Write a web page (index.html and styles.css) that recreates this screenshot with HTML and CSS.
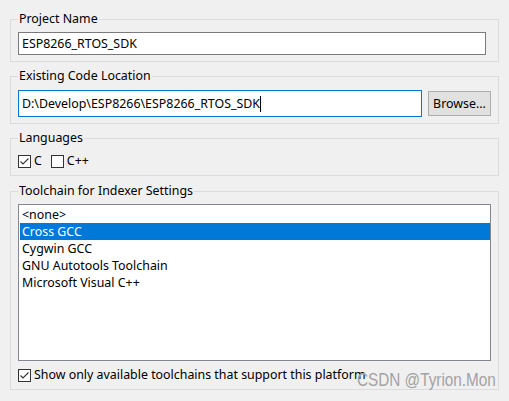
FILE: index.html
```html
<!DOCTYPE html>
<html>
<head>
<meta charset="utf-8">
<link rel="stylesheet" href="styles.css">
</head>
<body>
<div class="dialog">
  <fieldset class="group g-name">
    <legend>Project Name</legend>
    <div class="field field-name">ESP8266_RTOS_SDK</div>
  </fieldset>

  <fieldset class="group g-loc">
    <legend>Existing Code Location</legend>
    <div class="row">
      <div class="field field-loc focused">D:\Develop\ESP8266\ESP8266_RTOS_SDK<span class="caret"></span></div>
      <div class="button">Browse...</div>
    </div>
  </fieldset>

  <fieldset class="group g-lang">
    <legend>Languages</legend>
    <div class="checks">
      <label class="check"><span class="box"><svg viewBox="0 0 11 11" width="11" height="11"><polyline points="1.5,5.5 4,8 9.5,2.5" fill="none" stroke="#333" stroke-width="1.1"/></svg></span>C</label>
      <label class="check"><span class="box"></span>C++</label>
    </div>
  </fieldset>

  <fieldset class="group g-tool">
    <legend>Toolchain for Indexer Settings</legend>
    <ul class="list">
      <li>&lt;none&gt;</li>
      <li class="selected">Cross GCC</li>
      <li>Cygwin GCC</li>
      <li>GNU Autotools Toolchain</li>
      <li>Microsoft Visual C++</li>
    </ul>
    <label class="check show-only"><span class="box"><svg viewBox="0 0 11 11" width="11" height="11"><polyline points="1.5,5.5 4,8 9.5,2.5" fill="none" stroke="#333" stroke-width="1.1"/></svg></span>Show only available toolchains that support this platform</label>
  </fieldset>
</div>
<div class="watermark">CSDN @Tyrion.Mon</div>
</body>
</html>
```

FILE: styles.css
```css
html, body {
  margin: 0;
  padding: 0;
  background: #f0f0f0;
}

body {
  font-family: "Noto Sans", "Liberation Sans", sans-serif;
  font-size: 12.4px;
  color: #000;
  width: 509px;
  height: 401px;
  overflow: hidden;
  position: relative;
}

.dialog {
  padding: 11px 10px 0 10px;
  display: flex;
  flex-direction: column;
  gap: 6px;
}

.group {
  box-sizing: border-box;
  width: 489px;
  margin: 0;
  border: 1px solid #dcdcdc;
  padding: 5px 7px 6px 7px;
  min-width: 0;
}

.group legend {
  padding: 0 1px;
  line-height: 16px;
  height: 16px;
  color: #000;
}

.field {
  box-sizing: border-box;
  background: #fff;
  border: 1px solid #7a7a7a;
  padding: 0 3px;
  display: flex;
  align-items: center;
  white-space: nowrap;
}

.field-name {
  width: 468px;
  height: 23px;
}

.g-loc {
  padding-top: 6px;
}

.row {
  display: flex;
  align-items: center;
  gap: 6px;
}

.field-loc {
  width: 404px;
  height: 27px;
}

.focused {
  border-color: #0078d7;
}

.caret {
  display: inline-block;
  width: 1px;
  height: 16px;
  background: #000;
}

.button {
  box-sizing: border-box;
  width: 63px;
  height: 25px;
  background: #e1e1e1;
  border: 1px solid #adadad;
  display: flex;
  align-items: center;
  justify-content: center;
}

.g-lang {
  padding-top: 7px;
  margin-bottom: 1px;
}

.checks {
  display: flex;
  gap: 9px;
  height: 16px;
  align-items: center;
}

.check {
  display: flex;
  align-items: center;
  gap: 3px;
  line-height: 16px;
  height: 16px;
}

.box {
  box-sizing: border-box;
  width: 13px;
  height: 13px;
  border: 1px solid #333;
  background: #fff;
  display: flex;
}

.box svg {
  display: block;
}

.list {
  box-sizing: border-box;
  list-style: none;
  margin: 0;
  width: 473px;
  height: 157px;
  background: #fff;
  border: 1px solid #828790;
  padding: 1px 0 0 1px;
}

.list li {
  height: 17px;
  line-height: 17px;
  padding-left: 2px;
}

.list li.selected {
  background: #0078d7;
  color: #fff;
}

.show-only {
  margin-top: 6px;
}

.watermark {
  position: absolute;
  left: 357px;
  top: 369px;
  font-family: "Liberation Sans", sans-serif;
  font-size: 18px;
  line-height: 22px;
  color: #a3a3a3;
  white-space: nowrap;
  transform-origin: left top;
  transform: scaleX(0.85);
}
```
